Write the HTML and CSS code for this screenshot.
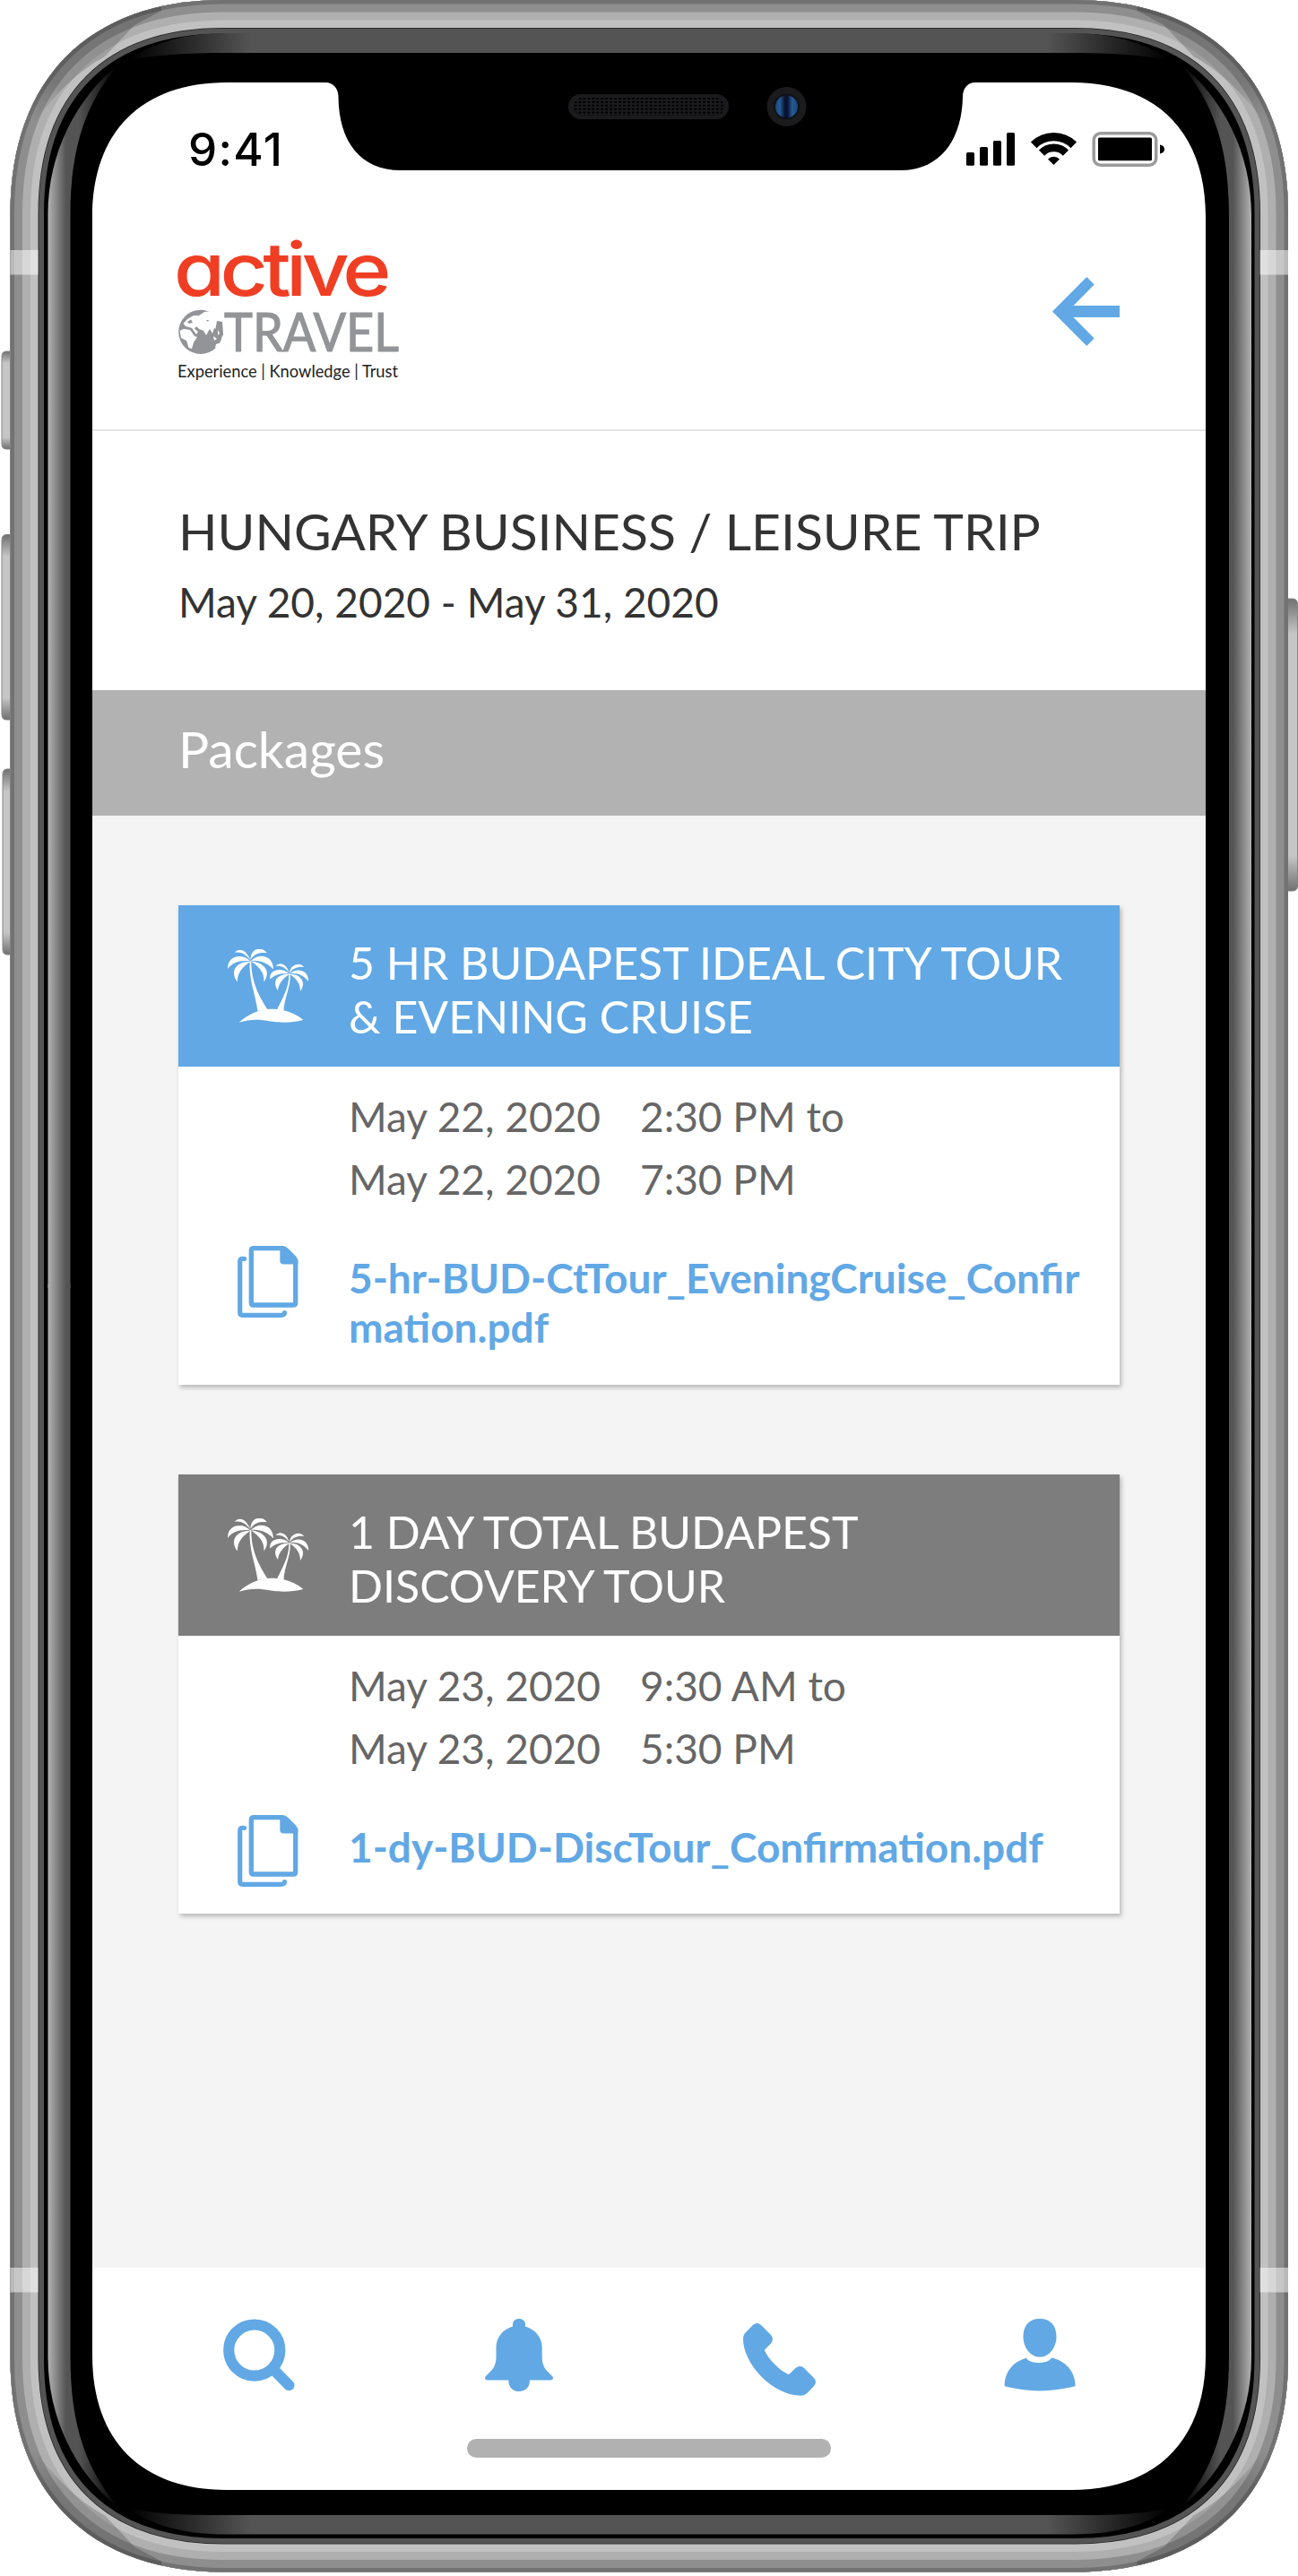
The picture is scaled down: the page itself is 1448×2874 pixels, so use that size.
FILE: index.html
```html
<!DOCTYPE html>
<html lang="en">
<head>
<meta charset="utf-8">
<title>Active Travel – Packages</title>
<link rel="stylesheet" href="styles.css">
</head>
<body>
<svg class="defs" width="0" height="0" aria-hidden="true">
  <symbol id="palms" viewBox="0 0 90 82">
    <path d="M24.6 13C23.5 35 31 50 33.4 69L44.5 67.5C35 52 26.500 38 26.200 13Z"/>
    <path d="M25.3 12.500C22 2 13-3 7.700 4C14 2.500 20 5 25.300 12.500Z"/>
    <path d="M25.500 12C25-1 38-4 43.800 4.300C36 3 29 5 25.500 12Z"/>
    <path d="M25 13.500C17 4-1 7 .2 22C5 15 14 12 25 13.500Z"/>
    <path d="M24.800 14C12 13 1 23 10.800 36.500C11 25 17 20 24.800 14Z"/>
    <path d="M26 13C34 4 51 6 50.900 22.500C45 16 37 12 26 13Z"/>
    <path d="M26 13.500C38 14 50 23 40.500 36.500C41 25 34 19 26 13.500Z"/>
    <path d="M68.300 27C69 42 61 55 54.500 68.500H62.500C63 54 70.500 43 69.800 27Z"/>
    <path d="M68.500 26.500C66 16 58 13.500 53.500 19C59 18 64 20 68.500 26.500Z"/>
    <path d="M69 26.500C70 17 80 14 85.300 19.800C78 19 73 21 69 26.500Z"/>
    <path d="M68.500 27.500C61 20 46 22 47.200 33.500C53 28 60 26.500 68.500 27.500Z"/>
    <path d="M68.500 28C58 27 48 34 56 46C57 37 63 32 68.500 28Z"/>
    <path d="M69.200 27.500C77 20 91 23 90 36C84 29 78 26 69.200 27.500Z"/>
    <path d="M69.200 28C80 27 89 36 81 47C81 38 76 32 69.200 28Z"/>
    <path d="M12.700 81.800C22 73 35 67 48 66.800C63 66 76 72 84.300 79C72 82 61 82.500 48 80.500C34 78 25 78 12.700 81.800Z"/>
  </symbol>
  <symbol id="docs" viewBox="0 0 68 80">
    <path d="M49.500 2.700H18Q15.300 2.700 15.300 5.400V63.400Q15.300 66 18 66H62Q64.700 66 64.700 63.400V16.500Z" fill="none" stroke="currentColor" stroke-width="5.300"/>
    <path d="M47.300 0H50Q53.500 0 56.500 3L65 11.500Q67.300 14 67.300 17V20.400H51.500Q47.300 20.400 47.300 16.500Z" fill="currentColor"/>
    <path d="M7.600 14.500Q2.700 13.500 2.700 17V74.500Q2.700 77.300 5.500 77.300H48Q52.500 77.300 52.500 74.500" fill="none" stroke="currentColor" stroke-width="5.200" stroke-linecap="round"/>
  </symbol>
</svg>

<div class="phone">
  <svg class="frame" viewBox="0 0 1448 2874" aria-hidden="true">
    <defs>
      <path id="body" d="M11.500 238C11.500 88 99.500 0 249.500 0H1199C1349 0 1437 88 1437 238V2631C1437 2781 1349 2869.500 1199 2869.500H249.500C99.500 2869.500 11.500 2781 11.500 2631Z"/>
      <clipPath id="bodyClip"><use href="#body"/></clipPath>
      <linearGradient id="key" x1="0" y1="0" x2="0" y2="1">
        <stop offset="0" stop-color="#707070"/><stop offset=".12" stop-color="#c6c6c6"/>
        <stop offset=".88" stop-color="#c6c6c6"/><stop offset="1" stop-color="#707070"/>
      </linearGradient>
      <linearGradient id="sideL" gradientUnits="userSpaceOnUse" x1="53" y1="0" x2="130" y2="0">
        <stop offset="0" stop-color="#b4b4b4"/><stop offset=".27" stop-color="#545454"/>
        <stop offset=".45" stop-color="#545454"/><stop offset="1" stop-color="#000"/>
      </linearGradient>
      <linearGradient id="endL" gradientUnits="userSpaceOnUse" x1="145" y1="0" x2="280" y2="0">
        <stop offset="0" stop-color="#000"/><stop offset="1" stop-color="#545454"/>
      </linearGradient>
      <linearGradient id="lens" x1="0" y1="0" x2="1" y2="0">
        <stop offset="0" stop-color="#1c4778"/><stop offset=".2" stop-color="#245b98"/>
        <stop offset=".42" stop-color="#0b1230"/><stop offset=".54" stop-color="#0b1230"/>
        <stop offset=".75" stop-color="#245b98"/><stop offset="1" stop-color="#1c4778"/>
      </linearGradient>
      <linearGradient id="shade" gradientUnits="userSpaceOnUse" x1="180" y1="10" x2="40" y2="140">
        <stop offset="0" stop-color="#000" stop-opacity=".2"/><stop offset=".75" stop-color="#000" stop-opacity=".16"/>
        <stop offset="1" stop-color="#000" stop-opacity="0"/>
      </linearGradient>
      <pattern id="mesh" patternUnits="userSpaceOnUse" x="640.500" y="109" width="4.950" height="3.900">
        <rect width="3" height="2" fill="#000"/>
      </pattern>
      <g id="glint">
        <path d="M180 12L150 28L117 63Q75 85 34 142L0 130V0H180Z" fill="url(#shade)"/>
      </g>
      <g id="sheen">
        <path d="M53.500 1437V240C53.500 170 85 110 133 71C98 112 78.500 160 78.500 240V1437Z" fill="url(#sideL)"/>
      </g>
      <path id="cap" d="M724 37H252C205 37 170 48 138 69C170 61 210 59 252 59H724Z" fill="url(#endL)"/>
      <path id="capLow" d="M724 42.500H252C205 42.500 170 52 138 74C170 64 210 64 252 64H724Z" fill="url(#endL)"/>
    </defs>
    <g fill="url(#key)" stroke="#858585">
      <path d="M13 392H7Q2 392 2 398V495Q2 501 7 501H13Z"/>
      <path d="M13 596.500H7Q2 596.500 2 603V797Q2 803 7 803H13Z"/>
      <path d="M13 858H8Q3 858 3 864V1059Q3 1065 8 1065H13Z"/>
      <path d="M1436 668H1442Q1447.500 668 1447.500 674V988Q1447.500 994 1442 994H1436Z"/>
    </g>
    <g clip-path="url(#bodyClip)">
      <use href="#body" fill="#000"/>
      <g fill="none">
        <use href="#body" stroke="#545454" stroke-width="75"/>
        <use href="#body" stroke="#222" stroke-width="63.500"/>
        <use href="#body" stroke="#c1c1c1" stroke-width="62"/>
        <use href="#body" stroke="#afafaf" stroke-width="45"/>
        <use href="#body" stroke="#8e8e8e" stroke-width="27"/>
        <use href="#body" stroke="#727272" stroke-width="9"/>
      </g>
    </g>
    <clipPath id="rim"><path clip-rule="evenodd" d="M0 0H1448V2874H0ZM42 240C42 100 110 31 250 31H1198C1338 31 1406 100 1406 240V2630C1406 2770 1338 2838 1198 2838H250C110 2838 42 2770 42 2630Z"/></clipPath>
    <g clip-path="url(#rim)"><g clip-path="url(#bodyClip)">
      <use href="#glint"/>
      <use href="#glint" transform="matrix(-1 0 0 1 1448.500 0)"/>
      <use href="#glint" transform="matrix(1 0 0 -1 0 2869.500)"/>
      <use href="#glint" transform="matrix(-1 0 0 -1 1448.500 2869.500)"/>
    </g></g>
    <g fill="#fff" fill-opacity=".5">
      <rect x="11.500" y="279" width="31" height="27.500"/><rect x="1405.500" y="279" width="31.500" height="27.500"/>
      <rect x="11.500" y="2530" width="31" height="27.500"/><rect x="1405.500" y="2530" width="31.500" height="27.500"/>
    </g>
    <use href="#sheen"/>
    <use href="#sheen" transform="matrix(-1 0 0 1 1449.500 0)"/>
    <use href="#sheen" transform="matrix(1 0 0 -1 0 2869.500)"/>
    <use href="#sheen" transform="matrix(-1 0 0 -1 1449.500 2869.500)"/>
    <use href="#cap"/><use href="#cap" transform="matrix(-1 0 0 1 1448 0)"/>
    <use href="#capLow" transform="matrix(1 0 0 -1 0 2870)"/><use href="#capLow" transform="matrix(-1 0 0 -1 1448 2870)"/>
    <path fill="#fff" d="M103 242C103 147 158 92 253 92H363C372 92 377.500 99 377.500 108C378 158 402 190 447 190H1005C1048 190 1073 157 1074 108C1074 99 1079 92 1088 92H1195C1290 92 1345 147 1345 242V2628C1345 2723 1290 2778 1195 2778H253C158 2778 103 2723 103 2628Z"/>
    <rect x="634" y="105" width="179" height="28" rx="14" fill="#1b1b1d"/>
    <rect x="640" y="109" width="168" height="20" rx="9" fill="url(#mesh)"/>
    <circle cx="877.500" cy="119" r="22" fill="#1b1b1d"/>
    <circle cx="877.500" cy="119" r="14.500" fill="#101216"/>
    <circle cx="877.500" cy="119" r="12.500" fill="url(#lens)"/>
  </svg>

  <main class="screen">
    <div class="status">
      <span class="clock">9:41</span>
      <svg class="status-icons" viewBox="1078 146 222 41">
        <rect x="1078" y="170" width="9" height="14.700" rx="1.500"/><rect x="1093" y="164" width="9" height="20.700" rx="1.500"/>
        <rect x="1108" y="157" width="9" height="27.700" rx="1.500"/><rect x="1123" y="148" width="9" height="36.700" rx="1.500"/>
        <g fill="none" stroke="#000">
          <path d="M1153.200 161.800A31.600 31.600 0 0 1 1197.800 161.800" stroke-width="9.400"/>
          <path d="M1162 170.600A19 19 0 0 1 1189 170.600" stroke-width="8.800"/>
        </g>
        <path d="M1175.400 184L1169 177.500A9.200 9.200 0 0 1 1182 177.500Z"/>
        <rect x="1220.200" y="148.700" width="69.500" height="35.600" rx="7.500" fill="none" stroke="#9b9b9b" stroke-width="3.500"/>
        <rect x="1225" y="153.500" width="60" height="25.800" rx="1.500"/>
        <path d="M1294 161.500Q1299 162.500 1299 166.500Q1299 170.500 1294 171.500Z"/>
      </svg>
    </div>

    <header class="brand">
      <svg class="logo" viewBox="198 266 248 164">
        <text class="logo-active" x="194" y="329.500" textLength="237" lengthAdjust="spacingAndGlyphs">active</text>
        <circle cx="223.800" cy="370.300" r="24.600" fill="#929497"/>
        <path fill="#fff" d="M204.500 361L209 356L216 352L222 352L228 348L236 347L243 350L250 362L244 361L242 368L239 366L237 372L234 367L230 374L227 369L222 367L219 364L217 367L221 370L219 373L214 366L207 364ZM200.500 369L205 367L212 368L217 375L220 376L216 382L214 389L210.500 388L208 380L202 377Z"/>
        <path fill="#929497" d="M209 359L213 356.500L215 360L211 361ZM242 358L248 359L249 374L245 376L243 372L240 369ZM236 374L240 377L237 379ZM230 357L233 357L232 359Z"/>
        <path fill="#fff" d="M238 375L242 378L239 380ZM241 384L247 382L244 387L240 388ZM243 368L245 372L243 374Z"/>
        <text class="logo-travel" x="250" y="392" textLength="195" lengthAdjust="spacingAndGlyphs">TRAVEL</text>
        <text class="logo-tag" x="198" y="421" textLength="246" lengthAdjust="spacingAndGlyphs">Experience | Knowledge | Trust</text>
      </svg>
      <svg class="back" viewBox="0 0 75 77"><path d="M0 38.500L38.300 0L46.700 8.500L23.500 32H75V45H23.500L46.700 68.500L38.300 77Z"/></svg>
    </header>

    <section class="trip">
      <h1>HUNGARY BUSINESS / LEISURE TRIP</h1>
      <p>May 20, 2020 - May 31, 2020</p>
    </section>

    <h2 class="section-bar">Packages</h2>

    <div class="cards">
      <article class="card">
        <div class="card-head">
          <svg class="palms"><use href="#palms"/></svg>
          <h3>5 HR BUDAPEST IDEAL CITY TOUR<br>&amp; EVENING CRUISE</h3>
        </div>
        <div class="times">
          <span>May 22, 2020</span><span>2:30 PM to</span>
          <span>May 22, 2020</span><span>7:30 PM</span>
        </div>
        <div class="file">
          <svg class="docs"><use href="#docs"/></svg>
          <a>5-hr-BUD-CtTour_EveningCruise_Confir<br>mation.pdf</a>
        </div>
      </article>
      <article class="card card-muted">
        <div class="card-head">
          <svg class="palms"><use href="#palms"/></svg>
          <h3>1 DAY TOTAL BUDAPEST<br>DISCOVERY TOUR</h3>
        </div>
        <div class="times">
          <span>May 23, 2020</span><span>9:30 AM to</span>
          <span>May 23, 2020</span><span>5:30 PM</span>
        </div>
        <div class="file">
          <svg class="docs"><use href="#docs"/></svg>
          <a>1-dy-BUD-DiscTour_Confirmation.pdf</a>
        </div>
      </article>
    </div>

    <nav class="tabs">
      <svg class="tab search" viewBox="0 0 81 81"><circle cx="35.200" cy="35" r="28.900" fill="none" stroke="currentColor" stroke-width="12.300"/><path d="M58 58L74.300 74.600" stroke="currentColor" stroke-width="12.300" stroke-linecap="round"/></svg>
      <svg class="tab bell" viewBox="0 0 76 81"><path d="M31.200 8.500C30 3 33.500 0 38 0S46 3 44.800 8.500C56 11.500 63.700 21 63.700 32V43C63.700 51 67 56.500 71 60L75 64C77 66 76 68.500 73 68.500H49.800C50.500 76 45 81 38 81S26 76 26.300 68.500H3C0 68.500-.7 66 1 64L5 60C9 56.500 12.500 51 12.500 43V32C12.500 21 20 11.500 31.200 8.500Z"/></svg>
      <svg class="tab call" viewBox="0 0 81 81"><path d="M11 2Q15.500-2 20 2L31 13Q35 18 31 22.500L23.700 30C28 40 41 53 51 57.300L58.500 50Q63.500 46 68 50L79 61Q83 65.500 79 70L72 77.500Q69 80.500 64.500 80.700C34 81 0 46 0 17.500Q0 13 3 10Z"/></svg>
      <svg class="tab" viewBox="0 0 79 81"><path d="M39.500 0C51 0 58 7 58 20C58 32 50 42.700 39.500 42.700S21 32 21 20C21 7 28 0 39.500 0ZM24.500 43.700C28 51 49 51 52.500 43.500C69 47 79.500 60 79 75.300Q39 85.500.2 75.300C0 60 9 48 24.500 43.700Z"/></svg>
    </nav>
    <div class="home-bar"></div>
  </main>
</div>
</body>
</html>
```

FILE: styles.css
```css
* { box-sizing: border-box; }
body {
  margin: 0;
  background: #fff;
  font-family: Lato, "Liberation Sans", sans-serif;
}
h1, h2, h3, p { margin: 0; font-weight: 400; }
svg { display: block; }
.defs { position: absolute; }

.phone { display: grid; width: 1448px; height: 2874px; }
.frame, .screen { grid-area: 1 / 1; }
.frame { width: 1448px; height: 2874px; }
.screen {
  width: 1242px;
  height: 2686px;
  margin: 92px 0 0 103px;
  display: flex;
  flex-direction: column;
}

.status {
  height: 148px;
  padding: 0 45px 0 107px;
  display: flex;
  align-items: center;
  justify-content: space-between;
}
.clock { font: 500 51px/60px Inter, sans-serif; letter-spacing: 1.3px; padding-top: 1px; }
.status-icons { width: 222px; height: 41px; }

.brand {
  height: 241px;
  padding: 26px 96px 0 95px;
  border-bottom: 2px solid #e4e4e4;
  display: flex;
  justify-content: space-between;
  align-items: flex-start;
}
.logo { width: 248px; height: 164px; overflow: visible; }
.logo-active {
  font: 500 82px Inter, sans-serif;
  font-feature-settings: "cv11";
  letter-spacing: -5px;
  fill: #ef3e24;
}
.logo-travel { font: 400 60px Lato, sans-serif; fill: #929497; stroke: #929497; stroke-width: 1.2px; }
.logo-tag { font: 400 19px Lato, sans-serif; fill: #222; }
.back { width: 75px; height: 77px; margin-top: 43px; fill: #61a8e5; }

.trip { height: 289px; padding: 73px 96px 0; color: #333; }
.trip h1 { font-size: 57px; line-height: 76px; white-space: nowrap; }
.trip p { font-size: 46px; line-height: 60px; margin-top: 12px; }

.section-bar {
  height: 140px;
  padding: 0 96px;
  background: #b2b2b2;
  color: #fff;
  font-size: 57px;
  line-height: 130px;
}

.cards {
  height: 1620px;
  padding: 100px 96px 0;
  background: #f4f4f4;
  display: flex;
  flex-direction: column;
  gap: 100px;
}
.card {
  height: 535px;
  background: #fff;
  box-shadow: 2px 3px 5px rgba(0, 0, 0, .25);
}
.card-muted { height: 490px; }
.card-head {
  height: 180px;
  padding: 34px 0 0 55px;
  display: flex;
  background: #61a8e5;
  color: #fff;
}
.card-muted .card-head { background: #7d7d7d; }
.palms { width: 90px; height: 82px; margin: 15px 45px 0 0; fill: #fff; }
.card h3 { font-size: 50px; line-height: 60px; white-space: nowrap; }
.times {
  display: grid;
  grid-template-columns: 325px auto;
  padding: 21px 0 0 190px;
  font-size: 46px;
  line-height: 70px;
  color: #666;
}
.file { display: flex; padding: 39px 0 0 66px; color: #61a8e5; }
.docs { width: 68px; height: 80px; flex: none; margin-right: 56px; }
.file a { font-size: 46px; font-weight: 700; line-height: 55px; margin-top: 8px; white-space: nowrap; }

.tabs {
  height: 190px;
  padding: 57px 0 0 146px;
  display: flex;
  align-items: flex-start;
  color: #61a8e5;
  fill: currentColor;
}
.tab { width: 80px; height: 81px; }
.search { margin-right: 212px; }
.bell { width: 76px; margin-right: 212px; }
.call { width: 81px; margin: 5px 210px 0 0; }
.home-bar { width: 406px; height: 21px; margin: 1px 0 0 418px; border-radius: 11px; background: #b1b1b1; }
```
